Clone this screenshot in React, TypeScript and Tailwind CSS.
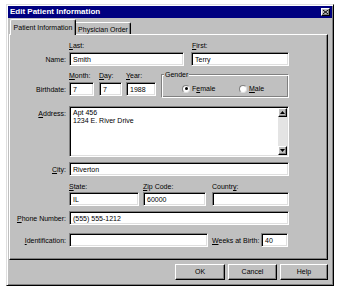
import React from "react";

const FONT = "font-['Liberation_Sans',Arial,sans-serif]";
const sunken =
  "bg-white border border-t-[#808080] border-l-[#808080] border-r-white border-b-white shadow-[inset_1px_1px_0_#000,inset_-1px_-1px_0_#dfdfdf]";
const raised =
  "bg-[#c0c0c0] border border-t-white border-l-white border-r-black border-b-black shadow-[inset_-1px_-1px_0_#808080]";

function Field({ cls, value }: { cls: string; value?: string }) {
  return (
    <div className={`h-[14px] ${sunken} pl-[3px] flex items-center text-[7px] leading-[9px] text-black ${cls}`}>
      {value}
    </div>
  );
}

function U({ children }: { children: React.ReactNode }) {
  return <span className="underline underline-offset-[1px]">{children}</span>;
}

function Radio({ checked, label }: { checked?: boolean; label: React.ReactNode }) {
  return (
    <div className="flex items-center gap-[2px]">
      <div className="w-[8px] h-[8px] rounded-full bg-white border border-t-[#808080] border-l-[#808080] border-r-[#dfdfdf] border-b-[#dfdfdf] flex items-center justify-center">
        {checked && <div className="w-[3px] h-[3px] rounded-full bg-black" />}
      </div>
      <span>{label}</span>
    </div>
  );
}

function Btn({ cls, label }: { cls: string; label: string }) {
  return (
    <div className={`h-[16px] ${raised} flex items-center justify-center text-[7px] ${cls}`}>{label}</div>
  );
}

export default function App() {
  return (
    <div className={`w-[338px] h-[290px] bg-white pl-[6px] pt-[4px] ${FONT} text-black`}>
      <div className="w-[328px] h-[282px] bg-[#c0c0c0] border border-t-[#dfdfdf] border-l-[#dfdfdf] border-r-black border-b-black shadow-[inset_1px_1px_0_#fff,inset_-1px_-1px_0_#808080] p-[1px] flex flex-col">
        {/* Title bar */}
        <div className="h-[12px] bg-[#000080] flex items-center justify-between pl-[2px] pr-[2px]">
          <span className="text-white font-bold text-[8px] leading-[10px]">Edit Patient Information</span>
          <div className={`w-[9px] h-[8px] ${raised} flex items-center justify-center`}>
            <svg width="5" height="4" viewBox="0 0 5 4">
              <path d="M0 0L5 4M5 0L0 4" stroke="#000" strokeWidth="1" />
            </svg>
          </div>
        </div>

        <div className="px-[1px] pt-[2px] flex flex-col">
          {/* Tabs */}
          <div className="flex items-end h-[14px] pl-[1px]">
            <div className="relative z-10 h-[16px] -mb-[1px] w-[66px] bg-[#c0c0c0] border-t border-l border-t-white border-l-white border-r border-r-black shadow-[inset_-1px_0_0_#808080] rounded-t-[2px] flex items-start justify-center pt-[3px] text-[7px] leading-[9px]">
              Patient Information
            </div>
            <div className="h-[12px] w-[55px] bg-[#c0c0c0] border-t border-t-white border-r border-r-black shadow-[inset_-1px_0_0_#808080] rounded-tr-[2px] flex items-start justify-center pt-[2px] text-[7px] leading-[9px]">
              Physician Order
            </div>
          </div>

          {/* Panel */}
          <div className="w-[319px] h-[226px] border border-t-white border-l-white border-r-black border-b-black shadow-[inset_-1px_-1px_0_#808080] text-[7px] leading-[9px] flex flex-col">
            {/* Last / First labels */}
            <div className="flex mt-[6px] h-[9px]">
              <div className="ml-[59px] w-[123px]"><U>L</U>ast:</div>
              <div><U>F</U>irst:</div>
            </div>
            {/* Name row */}
            <div className="flex items-center mt-[2px]">
              <div className="w-[57px] text-right pr-[1px]">Name:</div>
              <Field cls="ml-[2px] w-[115px]" value="Smith" />
              <Field cls="ml-[7px] w-[98px]" value="Terry" />
            </div>
            {/* Birthdate + gender */}
            <div className="flex mt-[5px]">
              <div className="flex flex-col">
                <div className="flex h-[9px]">
                  <div className="ml-[59px] w-[30px]"><U>M</U>onth:</div>
                  <div className="w-[27px]"><U>D</U>ay:</div>
                  <div><U>Y</U>ear:</div>
                </div>
                <div className="flex items-center mt-[2px]">
                  <div className="w-[57px] text-right pr-[1px]">Birthdate:</div>
                  <Field cls="ml-[2px] w-[25px]" value="7" />
                  <Field cls="ml-[5px] w-[23px]" value="7" />
                  <Field cls="ml-[4px] w-[30px]" value="1988" />
                </div>
              </div>
              <div className="relative ml-[5px] mt-[3px] w-[128px] h-[24px] border border-t-[#808080] border-l-[#808080] border-r-white border-b-white shadow-[inset_1px_1px_0_#fff,inset_-1px_-1px_0_#808080]">
                <div className="absolute -top-[5px] left-[2px] bg-[#c0c0c0] px-[1px]">Gender</div>
                <div className="flex items-center pt-[9px] pl-[20px]">
                  <div className="w-[57px]"><Radio checked label={<>F<U>e</U>male</>} /></div>
                  <Radio label={<><U>M</U>ale</>} />
                </div>
              </div>
            </div>
            {/* Address */}
            <div className="flex mt-[8px]">
              <div className="w-[57px] text-right pr-[1px] pt-[3px]"><U>A</U>ddress:</div>
              <div className={`ml-[2px] w-[220px] h-[51px] ${sunken} flex`}>
                <div className="flex-1 pl-[3px] pt-[2px] leading-[8px]">
                  <div>Apt 456</div>
                  <div>1234 E. River Drive</div>
                </div>
                <div className="w-[9px] mt-[1px] mb-[1px] mr-[1px] flex flex-col bg-[#e4e4e4]">
                  <div className={`h-[9px] ${raised} flex items-center justify-center`}>
                    <svg width="5" height="3" viewBox="0 0 5 3"><path d="M2.5 0L5 3H0Z" fill="#000" /></svg>
                  </div>
                  <div className="flex-1" />
                  <div className={`h-[9px] ${raised} flex items-center justify-center`}>
                    <svg width="5" height="3" viewBox="0 0 5 3"><path d="M0 0H5L2.5 3Z" fill="#000" /></svg>
                  </div>
                </div>
              </div>
            </div>
            {/* City */}
            <div className="flex items-center mt-[5px]">
              <div className="w-[57px] text-right pr-[1px]"><U>C</U>ity:</div>
              <Field cls="ml-[2px] w-[220px]" value="Riverton" />
            </div>
            {/* State labels */}
            <div className="flex mt-[6px] h-[9px]">
              <div className="ml-[59px] w-[74px]"><U>S</U>tate:</div>
              <div className="w-[69px]"><U>Z</U>ip Code:</div>
              <div>Countr<U>y</U>:</div>
            </div>
            <div className="flex items-center mt-[1px]">
              <Field cls="ml-[59px] w-[70px]" value="IL" />
              <Field cls="ml-[4px] w-[63px]" value="60000" />
              <Field cls="ml-[6px] w-[77px]" value="" />
            </div>
            {/* Phone */}
            <div className="flex items-center mt-[5px]">
              <div className="w-[57px] text-right pr-[1px] whitespace-nowrap"><U>P</U>hone Number:</div>
              <Field cls="ml-[2px] w-[220px]" value="(555) 555-1212" />
            </div>
            {/* Identification */}
            <div className="flex items-center mt-[8px]">
              <div className="w-[57px] text-right pr-[1px]"><U>I</U>dentification:</div>
              <Field cls="ml-[2px] w-[139px]" value="" />
              <div className="ml-[4px] w-[49px] whitespace-nowrap"><U>W</U>eeks at Birth:</div>
              <Field cls="w-[27px]" value="40" />
            </div>
          </div>

          {/* Buttons */}
          <div className="flex justify-end gap-[3px] mt-[4px] w-[319px]">
            <Btn cls="w-[50px]" label="OK" />
            <Btn cls="w-[49px]" label="Cancel" />
            <Btn cls="w-[48px]" label="Help" />
          </div>
        </div>
      </div>
    </div>
  );
}
